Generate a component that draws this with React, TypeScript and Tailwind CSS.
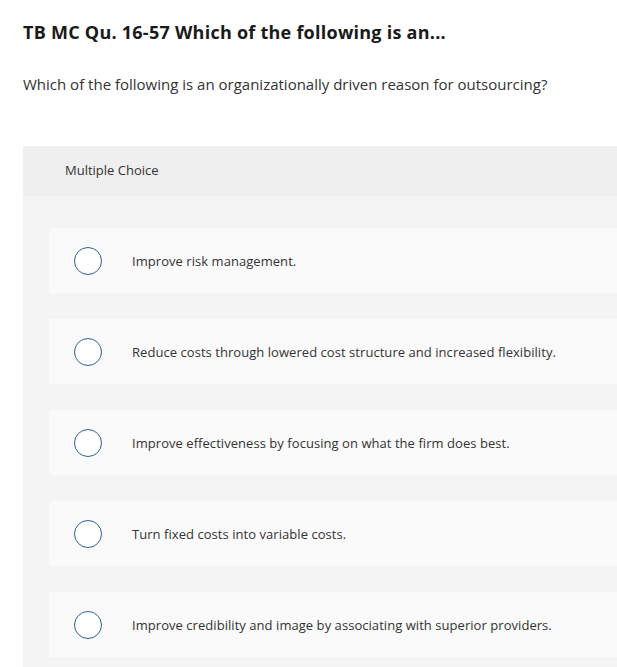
const choices = [
  "Improve risk management.",
  "Reduce costs through lowered cost structure and increased flexibility.",
  "Improve effectiveness by focusing on what the firm does best.",
  "Turn fixed costs into variable costs.",
  "Improve credibility and image by associating with superior providers.",
]

export default function App() {
  return (
    <div className="h-[667px] w-[617px] overflow-hidden bg-white font-['Open_Sans',sans-serif] text-[#222]">
      <h1 className="px-[23px] pt-[20px] text-[18px] font-bold leading-[24px] tracking-[0.25px] text-[#1a1a1a]">
        TB MC Qu. 16-57 Which of the following is an...
      </h1>
      <p className="mt-[30px] px-[23px] text-[15px] leading-[20px] text-[#333]">
        Which of the following is an organizationally driven reason for outsourcing?
      </p>

      <div className="ml-[23px] mt-[52px] w-[620px] rounded-tl-[3px] bg-[#f4f4f4]">
        <div className="flex h-[50px] items-center rounded-tl-[3px] bg-[#efefef] pl-[42px] text-[13px] text-[#333]">
          Multiple Choice
        </div>
        <div className="flex flex-col gap-[26px] pl-[26px] pt-[32px] pb-[20px]">
          {choices.map((c) => (
            <div
              key={c}
              className="flex h-[65px] items-center rounded-[3px] bg-[#fafafa] pl-[25px]"
            >
              <span className="h-[28px] w-[28px] shrink-0 rounded-full border-[1.5px] border-[#2c5f94] bg-white" />
              <span className="ml-[30px] mt-[2px] text-[13px] tracking-[0.05px] text-[#333]">{c}</span>
            </div>
          ))}
        </div>
      </div>
    </div>
  )
}
